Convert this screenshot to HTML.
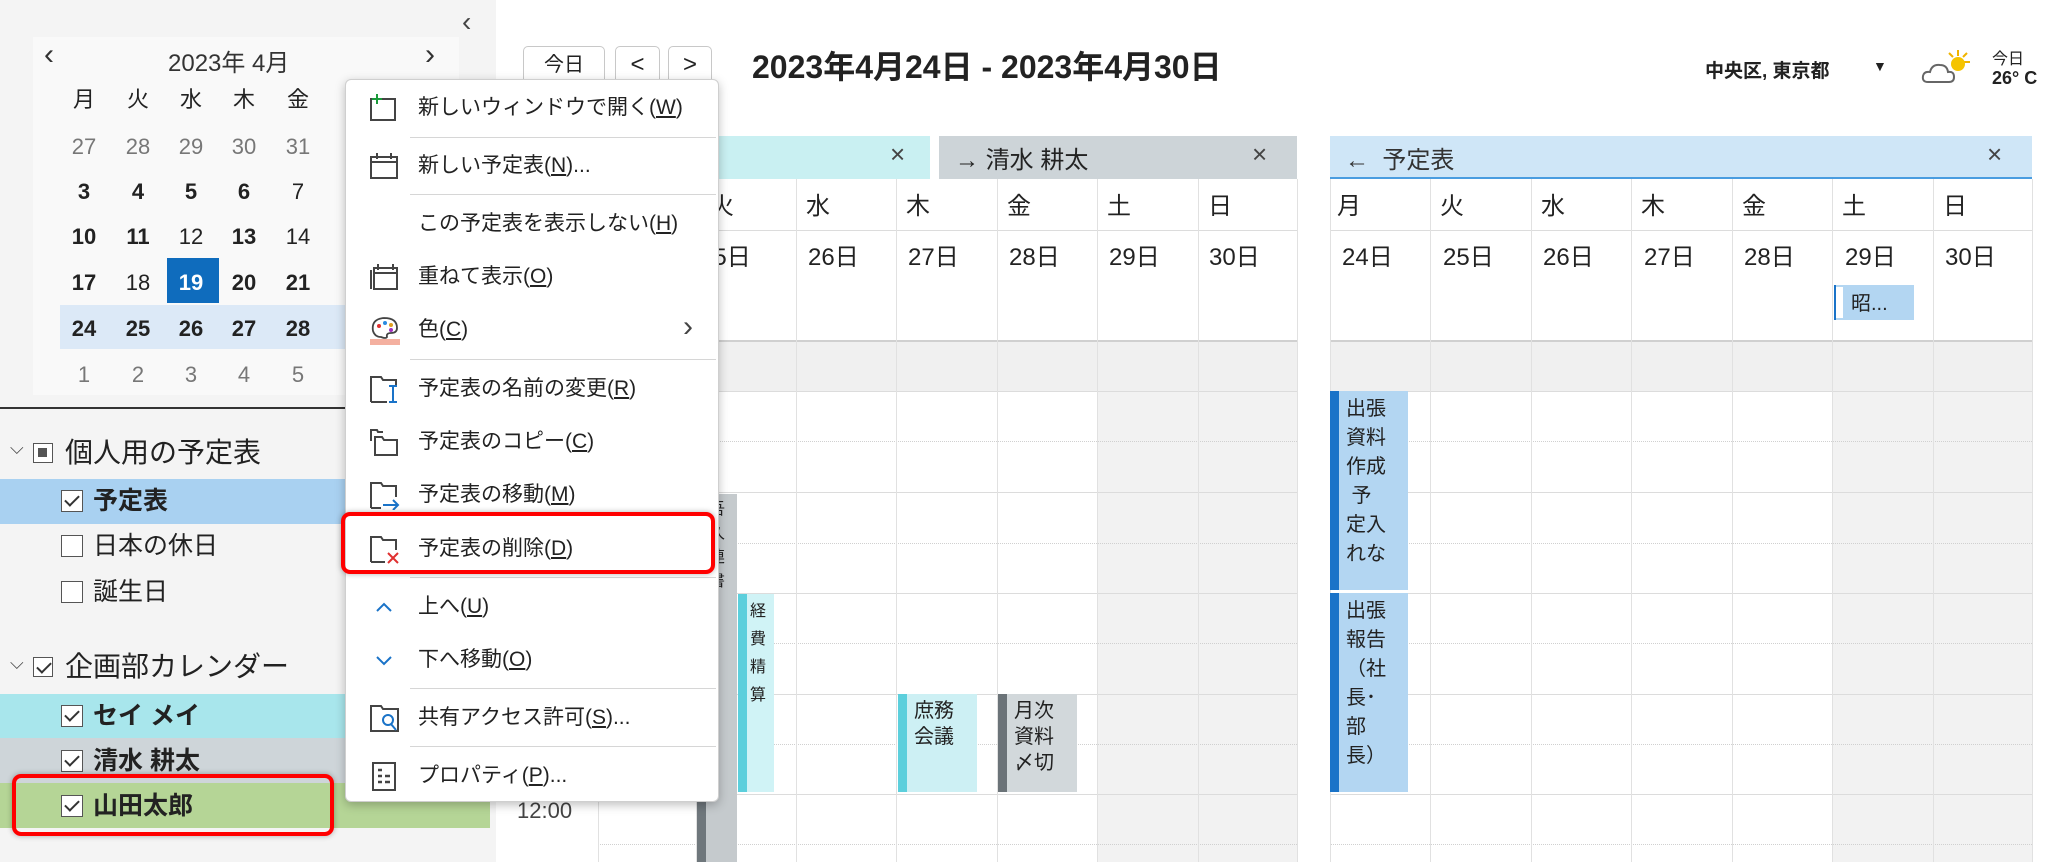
<!DOCTYPE html>
<html><head><meta charset="utf-8"><style>
*{margin:0;padding:0;box-sizing:border-box}
body{width:2048px;height:862px;overflow:hidden;background:#fff;position:relative;font-family:"Liberation Sans","Noto Sans CJK JP",sans-serif;color:#222}
.a{position:absolute}
.pane{left:0;top:0;width:496px;height:862px;background:#f4f4f4}
.mc{left:33px;top:37px;width:426px;height:358px;background:#f9f9f9}
.c{position:absolute;width:50px;text-align:center;font-size:22px;transform:translate(-25px,-13px);line-height:26px}
.b{font-weight:bold}
.g{color:#777}
.row{left:0;width:490px;height:45px}
.cb{position:absolute;width:22px;height:22px;border:1.5px solid #555;background:#fff}
.cb.k::after{content:"";position:absolute;left:6px;top:1px;width:6px;height:12px;border:solid #333;border-width:0 2px 2px 0;transform:rotate(45deg)}
.lt{position:absolute;font-size:25px;line-height:30px}
.menu{left:345px;top:79px;width:374px;height:723px;background:#fff;border:1px solid #cfcfcf;border-radius:6px;box-shadow:0 3px 10px rgba(0,0,0,.25)}
.mi{position:absolute;left:72px;font-size:21px;line-height:26px;transform:translateY(-13px);white-space:nowrap;color:#222}
.mi u{text-decoration:underline}
.sep{position:absolute;left:64px;right:2px;height:1px;background:#d6d6d6}
.ic{position:absolute;left:23px;transform:translateY(-15px)}
.vl{position:absolute;width:1px;background:#e1e1e1}
.hl{position:absolute;height:1px;background:#dcdcdc}
.dl{position:absolute;height:0;border-top:1px dotted #d0d0d0}
.dt{position:absolute;font-size:24px;line-height:28px}
.ev{position:absolute;font-size:20px;line-height:26px;padding:4px 0 0 16px;overflow:hidden}
.ev::before{content:"";position:absolute;left:0;top:0;bottom:0;width:9px;background:var(--bar)}
</style></head><body>

<div class="a pane"></div>
<div class="a" style="left:462px;top:6px;font-size:28px;color:#444">‹</div>
<div class="a mc"></div>
<div class="a" style="left:44px;top:38px;font-size:30px;color:#333">‹</div>
<div class="a" style="left:168px;top:43px;font-size:24px;color:#333">2023年 4月</div>
<div class="a" style="left:425px;top:38px;font-size:30px;color:#333">›</div>
<div class="a" style="left:60px;top:305px;width:300px;height:44px;background:#dce9f7"></div>
<div class="a" style="left:167px;top:258px;width:52px;height:45px;background:#0f6cbd"></div>
<div class="a" style="left:0;top:0">
<div class="c" style="left:84px;top:100px">月</div><div class="c" style="left:138px;top:100px">火</div><div class="c" style="left:191px;top:100px">水</div><div class="c" style="left:244px;top:100px">木</div><div class="c" style="left:298px;top:100px">金</div>
<div class="c g" style="left:84px;top:147px">27</div><div class="c g" style="left:138px;top:147px">28</div><div class="c g" style="left:191px;top:147px">29</div><div class="c g" style="left:244px;top:147px">30</div><div class="c g" style="left:298px;top:147px">31</div>
<div class="c b" style="left:84px;top:192px">3</div><div class="c b" style="left:138px;top:192px">4</div><div class="c b" style="left:191px;top:192px">5</div><div class="c b" style="left:244px;top:192px">6</div><div class="c" style="left:298px;top:192px">7</div>
<div class="c b" style="left:84px;top:237px">10</div><div class="c b" style="left:138px;top:237px">11</div><div class="c" style="left:191px;top:237px">12</div><div class="c b" style="left:244px;top:237px">13</div><div class="c" style="left:298px;top:237px">14</div>
<div class="c b" style="left:84px;top:283px">17</div><div class="c" style="left:138px;top:283px">18</div><div class="c b" style="left:191px;top:283px;color:#fff">19</div><div class="c b" style="left:244px;top:283px">20</div><div class="c b" style="left:298px;top:283px">21</div>
<div class="c b" style="left:84px;top:329px">24</div><div class="c b" style="left:138px;top:329px">25</div><div class="c b" style="left:191px;top:329px">26</div><div class="c b" style="left:244px;top:329px">27</div><div class="c b" style="left:298px;top:329px">28</div>
<div class="c g" style="left:84px;top:375px">1</div><div class="c g" style="left:138px;top:375px">2</div><div class="c g" style="left:191px;top:375px">3</div><div class="c g" style="left:244px;top:375px">4</div><div class="c g" style="left:298px;top:375px">5</div>
</div>
<div class="a" style="left:0;top:407px;width:345px;height:2px;background:#333"></div>

<div class="a" style="left:10px;top:438px;font-size:18px;color:#444">⌵</div>
<div class="cb a" style="left:33px;top:443px;width:20px;height:20px"><div style="position:absolute;left:4px;top:4px;width:9px;height:9px;background:#555"></div></div>
<div class="lt" style="left:65px;top:438px;font-size:28px">個人用の予定表</div>
<div class="a row" style="top:479px;background:#a9d1f1"></div>
<div class="cb k" style="left:61px;top:490px"></div><div class="lt b" style="left:93px;top:486px">予定表</div>
<div class="cb" style="left:61px;top:535px"></div><div class="lt" style="left:93px;top:531px">日本の休日</div>
<div class="cb" style="left:61px;top:581px"></div><div class="lt" style="left:93px;top:577px">誕生日</div>
<div class="a" style="left:10px;top:653px;font-size:18px;color:#444">⌵</div>
<div class="cb k a" style="left:33px;top:657px;width:20px;height:20px"></div>
<div class="lt" style="left:65px;top:652px;font-size:28px">企画部カレンダー</div>
<div class="a row" style="top:694px;background:#a8e6ec"></div>
<div class="a row" style="top:738px;background:#ced5d9"></div>
<div class="a row" style="top:783px;background:#b5d596"></div>
<div class="cb k" style="left:61px;top:705px"></div><div class="lt b" style="left:93px;top:701px">セイ メイ</div>
<div class="cb k" style="left:61px;top:750px"></div><div class="lt b" style="left:93px;top:746px">清水 耕太</div>
<div class="cb k" style="left:61px;top:795px"></div><div class="lt b" style="left:93px;top:791px">山田太郎</div>
<div class="a" style="left:12px;top:774px;width:322px;height:62px;border:4px solid #f00;border-radius:9px;box-shadow:0 0 6px rgba(0,0,0,.3)"></div>

<div class="a" style="left:523px;top:46px;width:82px;height:40px;border:1.5px solid #c8c8c8;border-radius:5px;font-size:20px;text-align:center;line-height:36px">今日</div>
<div class="a" style="left:615px;top:46px;width:45px;height:40px;border:1.5px solid #c8c8c8;border-radius:5px;font-size:24px;text-align:center;line-height:36px">&lt;</div>
<div class="a" style="left:668px;top:46px;width:44px;height:40px;border:1.5px solid #c8c8c8;border-radius:5px;font-size:24px;text-align:center;line-height:36px">&gt;</div>
<div class="a b" style="left:752px;top:48px;font-size:32px;line-height:38px">2023年4月24日 - 2023年4月30日</div>
<div class="a b" style="left:1705px;top:56px;font-size:19px">中央区, 東京都</div>
<div class="a" style="left:1873px;top:58px;font-size:14px">▼</div>
<svg class="a" style="left:1920px;top:48px" width="54" height="40" viewBox="0 0 54 40"><g stroke="#f0b400" stroke-width="2"><line x1="38" y1="2" x2="38" y2="8"/><line x1="50" y1="14" x2="44" y2="14"/><line x1="47" y1="5" x2="43" y2="9"/><line x1="29" y1="5" x2="33" y2="9"/></g><circle cx="38" cy="16" r="7" fill="#f5c400"/><path d="M8 34 Q2 34 3 28 Q4 23 10 24 Q12 16 20 17 Q27 17 28 24 Q34 23 34 29 Q34 34 29 34 Z" fill="#fff" stroke="#666" stroke-width="2"/></svg>
<div class="a" style="left:1992px;top:45px;font-size:16px">今日</div>
<div class="a b" style="left:1992px;top:68px;font-size:18px">26° C</div>

<div class="a" style="left:500px;top:136px;width:430px;height:43px;background:#c9f0f2"></div>
<div class="a" style="left:890px;top:139px;font-size:26px;color:#444">×</div>
<div class="a" style="left:939px;top:136px;width:358px;height:43px;background:#cdd4d8"></div>
<div class="a" style="left:955px;top:140px;font-size:24px">→ 清水 耕太</div>
<div class="a" style="left:1252px;top:139px;font-size:26px;color:#444">×</div>
<div class="a" style="left:1097px;top:391px;width:200px;height:471px;background:#f2f2f2"></div>
<div class="a" style="left:500px;top:342px;width:797px;height:49px;background:#f0f0f0"></div>
<div class="hl" style="left:500px;top:230px;width:797px"></div>
<div class="a" style="left:500px;top:340px;width:797px;height:2px;background:#d0d0d0"></div>
<div class="hl" style="left:500px;top:391px;width:797px"></div>
<div class="hl" style="left:500px;top:492px;width:797px"></div>
<div class="hl" style="left:500px;top:593px;width:797px"></div>
<div class="hl" style="left:500px;top:694px;width:797px"></div>
<div class="hl" style="left:500px;top:794px;width:797px"></div>
<div class="dl" style="left:598px;top:441px;width:699px"></div>
<div class="dl" style="left:598px;top:543px;width:699px"></div>
<div class="dl" style="left:598px;top:643px;width:699px"></div>
<div class="dl" style="left:598px;top:744px;width:699px"></div>
<div class="dl" style="left:598px;top:844px;width:699px"></div>
<div class="vl" style="left:598px;top:179px;height:683px"></div>
<div class="vl" style="left:696px;top:179px;height:683px"></div>
<div class="vl" style="left:796px;top:179px;height:683px"></div>
<div class="vl" style="left:896px;top:179px;height:683px"></div>
<div class="vl" style="left:997px;top:179px;height:683px"></div>
<div class="vl" style="left:1097px;top:179px;height:683px"></div>
<div class="vl" style="left:1198px;top:179px;height:683px"></div>
<div class="vl" style="left:1297px;top:179px;height:683px"></div>
<div class="dt" style="left:710px;top:193px">火</div><div class="dt" style="left:806px;top:193px">水</div><div class="dt" style="left:906px;top:193px">木</div><div class="dt" style="left:1007px;top:193px">金</div><div class="dt" style="left:1107px;top:193px">土</div><div class="dt" style="left:1208px;top:193px">日</div>
<div class="dt" style="left:700px;top:244px">25日</div><div class="dt" style="left:808px;top:244px">26日</div><div class="dt" style="left:908px;top:244px">27日</div><div class="dt" style="left:1009px;top:244px">28日</div><div class="dt" style="left:1109px;top:244px">29日</div><div class="dt" style="left:1209px;top:244px">30日</div>
<div class="a" style="left:517px;top:798px;font-size:22px;color:#444">12:00</div>
<div class="ev" style="left:697px;top:494px;width:40px;height:368px;background:#c5cacd;--bar:#6f777c;padding-left:12px;font-size:16px;line-height:24px">吾<br>久<br>連<br>書</div>
<div class="ev" style="left:738px;top:594px;width:36px;height:198px;background:#d0f3f6;--bar:#5ccfdc;padding-left:12px;font-size:16px;line-height:28px">経<br>費<br>精<br>算</div>
<div class="ev" style="left:898px;top:694px;width:79px;height:98px;background:#cdf0f4;--bar:#5ccfdc">庶務<br>会議</div>
<div class="ev" style="left:998px;top:694px;width:79px;height:98px;background:#d2d8db;--bar:#6b7378">月次<br>資料<br>〆切</div>

<div class="a" style="left:1330px;top:136px;width:702px;height:43px;background:#cfe6f7;border-bottom:2px solid #4a9de0"></div>
<div class="a" style="left:1345px;top:140px;font-size:24px;color:#333">←&nbsp; 予定表</div>
<div class="a" style="left:1987px;top:139px;font-size:26px;color:#444">×</div>
<div class="a" style="left:1832px;top:391px;width:200px;height:471px;background:#f2f2f2"></div>
<div class="a" style="left:1330px;top:342px;width:702px;height:49px;background:#f0f0f0"></div>
<div class="hl" style="left:1330px;top:230px;width:702px"></div>
<div class="a" style="left:1330px;top:340px;width:702px;height:2px;background:#d0d0d0"></div>
<div class="hl" style="left:1330px;top:391px;width:702px"></div>
<div class="hl" style="left:1330px;top:492px;width:702px"></div>
<div class="hl" style="left:1330px;top:593px;width:702px"></div>
<div class="hl" style="left:1330px;top:694px;width:702px"></div>
<div class="hl" style="left:1330px;top:794px;width:702px"></div>
<div class="dl" style="left:1330px;top:441px;width:702px"></div>
<div class="dl" style="left:1330px;top:543px;width:702px"></div>
<div class="dl" style="left:1330px;top:643px;width:702px"></div>
<div class="dl" style="left:1330px;top:744px;width:702px"></div>
<div class="dl" style="left:1330px;top:844px;width:702px"></div>
<div class="vl" style="left:1330px;top:179px;height:683px"></div>
<div class="vl" style="left:1430px;top:179px;height:683px"></div>
<div class="vl" style="left:1531px;top:179px;height:683px"></div>
<div class="vl" style="left:1631px;top:179px;height:683px"></div>
<div class="vl" style="left:1732px;top:179px;height:683px"></div>
<div class="vl" style="left:1832px;top:179px;height:683px"></div>
<div class="vl" style="left:1933px;top:179px;height:683px"></div>
<div class="vl" style="left:2032px;top:179px;height:683px"></div>
<div class="dt" style="left:1337px;top:193px">月</div><div class="dt" style="left:1440px;top:193px">火</div><div class="dt" style="left:1541px;top:193px">水</div><div class="dt" style="left:1641px;top:193px">木</div><div class="dt" style="left:1742px;top:193px">金</div><div class="dt" style="left:1842px;top:193px">土</div><div class="dt" style="left:1943px;top:193px">日</div>
<div class="dt" style="left:1342px;top:244px">24日</div><div class="dt" style="left:1443px;top:244px">25日</div><div class="dt" style="left:1543px;top:244px">26日</div><div class="dt" style="left:1644px;top:244px">27日</div><div class="dt" style="left:1744px;top:244px">28日</div><div class="dt" style="left:1845px;top:244px">29日</div><div class="dt" style="left:1945px;top:244px">30日</div>
<div class="a" style="left:1834px;top:285px;width:80px;height:35px;background:#b3d6f2;border-left:2px solid #1a73c8"></div>
<div class="a" style="left:1836px;top:287px;width:7px;height:31px;background:#fff"></div>
<div class="a" style="left:1851px;top:287px;font-size:20px">昭...</div>
<div class="ev" style="left:1330px;top:391px;width:78px;height:199px;background:#b3d6f2;--bar:#1a73c8;line-height:29px">出張<br>資料<br>作成<br>&nbsp;予<br>定入<br>れな</div>
<div class="ev" style="left:1330px;top:593px;width:78px;height:199px;background:#b3d6f2;--bar:#1a73c8;line-height:29px">出張<br>報告<br>（社<br>長･<br>部<br>長）</div>

<div class="a menu">
<svg class="ic" style="top:28px" width="32" height="30"><path d="M2 6 H26 V27 H2 Z M2 6" fill="none" stroke="#444" stroke-width="2"/><path d="M8 1 V11 M3 6 H13" stroke="#1a9a3a" stroke-width="2"/></svg>
<div class="mi" style="top:28px">新しいウィンドウで開く(<u>W</u>)</div>
<div class="sep" style="top:57px"></div>
<svg class="ic" style="top:86px" width="32" height="30"><path d="M2 6 H28 V27 H2 Z M2 11 H28 M8 2 V8 M22 2 V8" fill="none" stroke="#444" stroke-width="2"/></svg>
<div class="mi" style="top:86px">新しい予定表(<u>N</u>)...</div>
<div class="sep" style="top:114px"></div>
<div class="mi" style="top:144px">この予定表を表示しない(<u>H</u>)</div>
<svg class="ic" style="top:197px" width="32" height="30"><path d="M5 6 H28 V27 H5 Z M5 11 H28 M2 8 V27 M9 2 V8 M24 2 V8" fill="none" stroke="#444" stroke-width="2"/></svg>
<div class="mi" style="top:197px">重ねて表示(<u>O</u>)</div>
<svg class="ic" style="top:250px" width="32" height="30"><path d="M4 16 Q2 4 15 3 Q28 3 28 13 Q28 18 22 18 Q17 18 18 22 Q17 24 12 22 Q6 22 4 16 Z" fill="none" stroke="#444" stroke-width="1.8"/><circle cx="10" cy="11" r="2" fill="#e03030"/><circle cx="16" cy="8" r="2" fill="#2a8ae0"/><circle cx="22" cy="10" r="2" fill="#e0a020"/><circle cx="22" cy="15" r="2" fill="#a030c0"/><rect x="1" y="24" width="30" height="6" fill="#f4b0a0"/></svg>
<div class="mi" style="top:250px">色(<u>C</u>)</div>
<div class="a" style="left:337px;top:230px;font-size:30px;color:#444">›</div>
<div class="sep" style="top:279px"></div>
<svg class="ic" style="top:309px" width="32" height="30"><path d="M2 28 V3 H12 L14 6 H27 V11 M2 28 H18" fill="none" stroke="#444" stroke-width="2"/><path d="M24 12 V28 M20 12 H28 M20 28 H28" stroke="#1a73c8" stroke-width="2"/></svg>
<div class="mi" style="top:309px">予定表の名前の変更(<u>R</u>)</div>
<svg class="ic" style="top:362px" width="32" height="30"><path d="M2 14 V3 H8 L9 5 H14 M6 28 V10 H13 L15 13 H28 V28 Z" fill="none" stroke="#444" stroke-width="2"/></svg>
<div class="mi" style="top:362px">予定表のコピー(<u>C</u>)</div>
<svg class="ic" style="top:415px" width="32" height="30"><path d="M2 28 V3 H12 L14 6 H27 V17 M2 28 H12" fill="none" stroke="#444" stroke-width="2"/><path d="M14 25 H29 M24 20 L29 25 L24 30" fill="none" stroke="#1a73c8" stroke-width="2"/></svg>
<div class="mi" style="top:415px">予定表の移動(<u>M</u>)</div>
<svg class="ic" style="top:469px" width="32" height="30"><path d="M2 28 V3 H12 L14 6 H27 V16 M2 28 H16" fill="none" stroke="#444" stroke-width="2"/><path d="M19 19 L29 29 M29 19 L19 29" stroke="#e03030" stroke-width="2"/></svg>
<div class="mi" style="top:469px">予定表の削除(<u>D</u>)</div>
<div class="sep" style="top:497px"></div>
<svg class="ic" style="top:527px" width="32" height="30"><path d="M8 19 L15 12 L22 19" fill="none" stroke="#1a73c8" stroke-width="2"/></svg>
<div class="mi" style="top:527px">上へ(<u>U</u>)</div>
<svg class="ic" style="top:580px" width="32" height="30"><path d="M8 12 L15 19 L22 12" fill="none" stroke="#1a73c8" stroke-width="2"/></svg>
<div class="mi" style="top:580px">下へ移動(<u>O</u>)</div>
<div class="sep" style="top:608px"></div>
<svg class="ic" style="top:638px" width="32" height="30"><path d="M2 28 V3 H12 L14 6 H29 V28 Z" fill="none" stroke="#444" stroke-width="2"/><circle cx="19" cy="17" r="5" fill="none" stroke="#1a73c8" stroke-width="2"/><path d="M22 21 L27 27" stroke="#1a73c8" stroke-width="2"/></svg>
<div class="mi" style="top:638px">共有アクセス許可(<u>S</u>)...</div>
<div class="sep" style="top:666px"></div>
<svg class="ic" style="top:696px" width="32" height="30"><path d="M4 2 H26 V29 H4 Z" fill="none" stroke="#444" stroke-width="2"/><path d="M9 9 H13 M9 15 H13 M9 21 H13 M16 15 H21 M16 21 H21" stroke="#444" stroke-width="2.5"/></svg>
<div class="mi" style="top:696px">プロパティ(<u>P</u>)...</div>
</div>
<div class="a" style="left:341px;top:512px;width:374px;height:62px;border:4px solid #f00;border-radius:9px;box-shadow:0 0 6px rgba(0,0,0,.3)"></div>
</body></html>
